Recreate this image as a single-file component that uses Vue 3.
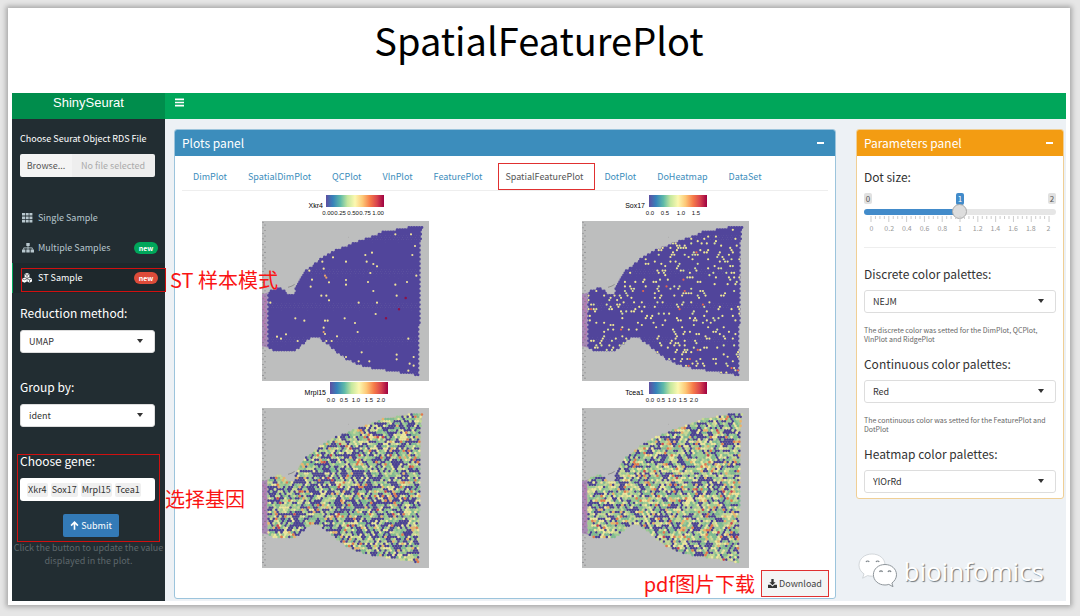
<script setup>
import { ref } from 'vue'

const tabs = ['DimPlot', 'SpatialDimPlot', 'QCPlot', 'VlnPlot', 'FeaturePlot', 'SpatialFeaturePlot', 'DotPlot', 'DoHeatmap', 'DataSet']
const activeTab = ref('SpatialFeaturePlot')
const genes = ['Xkr4', 'Sox17', 'Mrpl15', 'Tcea1']
const reduction = ref('UMAP')
const group = ref('ident')
const dotSize = ref(1)
const scale = ['0', '0.2', '0.4', '0.6', '0.8', '1', '1.2', '1.4', '1.6', '1.8', '2']
const palettes = ref([
  { id: 'discrete', label: 'Discrete color palettes:', value: 'NEJM', help: 'The discrete color was setted for the DimPlot, QCPlot, VlnPlot and RidgePlot' },
  { id: 'continuous', label: 'Continuous color palettes:', value: 'Red', help: 'The continuous color was setted for the FeaturePlot and DotPlot' },
  { id: 'heatmap', label: 'Heatmap color palettes:', value: 'YlOrRd', help: '' }
])

// Tissue section outline, in slide units
const outline = [
  [38, 308], [50, 300], [75, 293], [88, 300], [100, 310], [118, 312], [124, 288], [136, 260], [160, 235], [200, 205],
  [240, 181], [290, 160], [340, 142], [385, 125], [430, 117], [470, 110], [502, 110], [502, 124], [498, 140],
  [497, 250], [494, 400], [493, 558], [460, 550], [400, 541], [340, 531], [300, 520], [265, 500], [240, 480],
  [215, 458], [195, 445], [175, 441], [160, 448], [140, 465], [120, 482], [60, 482], [42, 472], [38, 440]
]
const outlinePath = 'M' + outline.map(p => p.join(' ')).join('L') + 'Z'

function inside(x, y) {
  let hit = false
  for (let i = 0, j = outline.length - 1; i < outline.length; j = i++) {
    const [xi, yi] = outline[i]
    const [xj, yj] = outline[j]
    if ((yi > y) !== (yj > y) && x < ((xj - xi) * (y - yi)) / (yj - yi) + xi) hit = !hit
  }
  return hit
}

function hash(a, b, s) {
  let n = Math.imul(a + 101, 374761393) ^ Math.imul(b + 57, 668265263) ^ Math.imul(s + 13, 1274126177)
  n = Math.imul(n ^ (n >>> 13), 1274126177)
  n = Math.imul(n ^ (n >>> 15), 2246822519)
  return ((n ^ (n >>> 16)) >>> 0) / 4294967296
}

const spots = []
for (let r = 0; r < 70; r++) {
  for (let c = 0; c < 64; c++) {
    const x = 26 + c * 7.8 + (r % 2 ? 3.9 : 0)
    const y = 98 + r * 6.8
    if (inside(x, y)) spots.push({ x: x.toFixed(1), y: y.toFixed(1), r, c })
  }
}

const BLUE = '#51459b'
const dots = list => list.map(([x, y]) => `M${x} ${y}h0`).join('')
const base = [{ color: BLUE, width: 8.8, d: dots(spots.map(s => [s.x, s.y])) }]

const xkr4 = [
  [422, 132], [469, 132], [481, 167], [473, 194], [352, 187], [332, 194], [235, 201], [203, 214], [274, 214], [336, 214],
  [356, 221], [367, 228], [207, 235], [164, 241], [347, 248], [485, 256], [172, 268], [274, 269], [274, 283], [340, 275],
  [223, 276], [457, 275], [422, 283], [168, 289], [356, 302], [200, 316], [215, 316], [223, 330], [426, 316], [47, 337],
  [312, 337], [367, 337], [363, 371], [270, 384], [122, 384], [149, 391], [211, 391], [219, 391], [301, 398], [207, 412],
  [309, 425], [211, 431], [247, 438], [94, 432], [67, 439], [79, 445], [129, 452], [215, 452], [231, 452], [461, 445],
  [321, 486], [274, 500], [312, 513], [344, 513], [426, 493], [426, 507], [477, 500], [465, 520], [477, 526], [461, 541]
]

function paint(pick, width) {
  const groups = {}
  for (const s of spots) {
    const color = pick(s)
    if (color) (groups[color] ||= []).push([s.x, s.y])
  }
  return Object.entries(groups).map(([color, list]) => ({ color, width, d: dots(list) }))
}

function sparse(s) {
  const v = hash(s.c, s.r, 4) * 0.78 + hash(s.c >> 1, s.r >> 1, 9) * 0.22
  if (v > 0.785) return hash(s.c, s.r, 7) > 0.95 ? '#e8684d' : hash(s.c, s.r, 8) > 0.8 ? '#d8e29a' : '#efe795'
  return null
}

function dense(seed, cut) {
  return s => {
    const v = hash(s.c, s.r, seed) * 0.58 + hash(s.c >> 1, s.r >> 1, seed + 3) * 0.42
    if (v < cut) return '#4a4294'
    const k = hash(s.c, s.r, seed + 5)
    if (k < 0.27) return '#7dbb91'
    if (k < 0.48) return '#9ccb94'
    if (k < 0.64) return '#c6d994'
    if (k < 0.87) return '#ece79c'
    if (k < 0.94) return '#eab36c'
    return k < 0.985 ? '#e27a4e' : '#c94750'
  }
}

const plots = [
  { gene: 'Xkr4', labelEnd: 61, bar: 64, tissue: '#aaa6b8', ticks: [['0.00', 66], ['0.25', 78], ['0.50', 91], ['0.75', 103], ['1.00', 116]],
    layers: [...base, { color: '#f0e39a', width: 6.6, d: dots(xkr4) }, { color: '#e9a368', width: 6.6, d: dots([[211, 256], [215, 262], [207, 425]]) }, { color: '#8d1148', width: 7.4, d: dots([[453, 323], [433, 357], [394, 384]]) }] },
  { gene: 'Sox17', labelEnd: 63, bar: 67, tissue: '#aaa6b8', ticks: [['0.0', 68], ['0.5', 83], ['1.0', 99], ['1.5', 114]],
    layers: [...base, ...paint(sparse, 6.6)] },
  { gene: 'Mrpl15', labelEnd: 64, bar: 68, tissue: '#b9c09c', ticks: [['0.0', 69], ['0.5', 82], ['1.0', 94], ['1.5', 107], ['2.0', 119]],
    layers: paint(dense(21, 0.45), 8) },
  { gene: 'Tcea1', labelEnd: 62, bar: 67, tissue: '#b9c09c', ticks: [['0.0', 68], ['0.5', 79], ['1.0', 90], ['1.5', 101], ['2.0', 112]],
    layers: paint(dense(44, 0.38), 8) }
]

const fiducials = Array.from({ length: 58 }, (_, i) => `M${i % 2 ? 31 : 25} ${96 + i * 8.2}h0`).join('')
</script>

<template>
  <main class="page">
    <section class="slide">
      <h1 class="title">SpatialFeaturePlot</h1>
      <div class="app">
        <header class="topbar">
          <a class="brand" href="#">ShinySeurat</a>
          <button class="toggle" type="button" aria-label="Toggle navigation">
            <svg viewBox="0 0 9 9" width="9" height="9"><path d="M0 1.3h9M0 4.5h9M0 7.7h9" stroke="#fff" stroke-width="1.7" /></svg>
          </button>
        </header>

        <div class="columns">
          <aside class="sidebar">
            <div class="upload">
              <label for="rds">Choose Seurat Object RDS File</label>
              <div class="file">
                <button type="button">Browse...</button>
                <input id="rds" type="text" placeholder="No file selected" readonly />
              </div>
            </div>

            <nav>
              <ul class="menu">
                <li>
                  <a href="#">
                    <svg class="mi" viewBox="0 0 12 10"><path d="M0 0h3v2.6H0zM3.7 0h3v2.6h-3zM7.4 0h3v2.6h-3zM0 3.4h3V6H0zM3.7 3.4h3V6h-3zM7.4 3.4h3V6h-3zM0 6.8h3v2.6H0zM3.7 6.8h3v2.6h-3zM7.4 6.8h3v2.6h-3z" fill="#b8c7ce" /></svg>
                    <span>Single Sample</span>
                  </a>
                </li>
                <li>
                  <a href="#">
                    <svg class="mi" viewBox="0 0 12 10"><path d="M4.3 0h3.4v3H4.3zM0 6.6h3.4v3H0zM4.3 6.6h3.4v3H4.3zM8.6 6.6H12v3H8.6z" fill="#b8c7ce" /><path d="M6 3v3.6M1.7 6.6V4.9h8.6v1.7" fill="none" stroke="#b8c7ce" stroke-width=".9" /></svg>
                    <span>Multiple Samples</span>
                    <small class="badge green">new</small>
                  </a>
                </li>
                <li class="active">
                  <a href="#">
                    <svg class="mi" viewBox="0 0 12 10"><path d="M5 0l2.4 1.1v3L5 5.2 2.600 4.100v-3zM2.500 4.600l2.400 1.100v2.800L2.500 9.700.1 8.500V5.700zM7.500 4.600l2.500 1.100v2.800L7.500 9.700 5.200 8.500V5.700z" fill="#fff" /><path d="M2.800 1.300L5 2.300l2.200-1M.4 5.900l2.100.9 2.200-.9M5.500 5.900l2 .9 2.200-.9M7.500 6.800v2.700M5 2.400v2.400" fill="none" stroke="#1e282c" stroke-width=".6" /></svg>
                    <span>ST Sample</span>
                    <small class="badge red">new</small>
                  </a>
                  <i class="mark mark-sample"></i>
                  <span class="note note-sample">ST 样本模式</span>
                </li>
              </ul>
            </nav>

            <div class="field">
              <label for="reduction">Reduction method:</label>
              <div class="pick">
                <select id="reduction" v-model="reduction"><option>UMAP</option><option>TSNE</option><option>PCA</option></select>
              </div>
            </div>
            <div class="field">
              <label for="group">Group by:</label>
              <div class="pick">
                <select id="group" v-model="group"><option>ident</option></select>
              </div>
            </div>
            <div class="field gene">
              <label for="gene">Choose gene:</label>
              <div class="tags">
                <span v-for="g in genes" :key="g" class="tag">{{ g }}</span>
                <input id="gene" type="text" />
              </div>
              <button class="submit" type="button">
                <svg viewBox="0 0 10 10" width="9" height="9"><path d="M5 9.600V1.500M1.200 5.200L5 1.400l3.800 3.800" fill="none" stroke="#fff" stroke-width="1.800" /></svg>
                Submit
              </button>
              <i class="mark mark-gene"></i>
              <span class="note note-gene">选择基因</span>
            </div>
            <p class="hint">Click the button to update the value displayed in the plot.</p>
          </aside>

          <div class="content">
            <section class="box plots-box">
              <header class="box-head blue">
                <h2>Plots panel</h2>
                <button type="button" aria-label="Collapse plots panel"><i></i></button>
              </header>
              <div class="tabs" role="tablist">
                <button v-for="t in tabs" :key="t" type="button" role="tab" :aria-selected="t === activeTab" :class="{ on: t === activeTab }" @click="activeTab = t">{{ t }}</button>
              </div>
              <div class="plots">
                <svg v-for="(p, i) in plots" :key="p.gene" class="plot" viewBox="0 0 167 187" role="img" :aria-label="p.gene">
                  <defs>
                    <linearGradient :id="'ramp' + i">
                      <stop offset="0" stop-color="#5e4fa2" />
                      <stop offset=".12" stop-color="#3682ba" />
                      <stop offset=".25" stop-color="#5fbaa8" />
                      <stop offset=".37" stop-color="#c4e79e" />
                      <stop offset=".5" stop-color="#fcf8b0" />
                      <stop offset=".63" stop-color="#fdc877" />
                      <stop offset=".76" stop-color="#f67b49" />
                      <stop offset=".88" stop-color="#d8434e" />
                      <stop offset="1" stop-color="#9e0142" />
                    </linearGradient>
                  </defs>
                  <text class="gene-name" :x="p.labelEnd" y="14" text-anchor="end">{{ p.gene }}</text>
                  <rect :x="p.bar" y="1" width="58" height="12" :fill="`url(#ramp${i})`" />
                  <text v-for="[t, x] in p.ticks" :key="t" class="tick" :x="x" y="21" text-anchor="middle">{{ t }}</text>
                  <svg x="0" y="27" width="167" height="161" viewBox="22 92 501 483">
                    <rect x="22" y="92" width="501" height="483" fill="#bdbebe" />
                    <path d="M22 312l20-6v166l-20-4z" fill="#a889b5" />
                    <path d="M24 320l12 14-10 18 12 20-12 24 12 22-12 30" fill="none" stroke="#c06fae" stroke-width="4" opacity=".6" />
                    <path :d="outlinePath" :fill="p.tissue" />
                    <path d="M100 291l12-4 8-5M281 141h1" fill="none" stroke="#777" stroke-width="2" />
                    <path :d="fiducials" stroke="#6d6d70" stroke-width="3.200" stroke-linecap="round" />
                    <path v-for="l in p.layers" :key="l.color" :d="l.d" :stroke="l.color" :stroke-width="l.width" stroke-linecap="round" />
                  </svg>
                </svg>
              </div>
              <footer class="actions">
                <span class="note">pdf图片下载</span>
                <button class="download" type="button">
                  <svg viewBox="0 0 10 10" width="9" height="9"><path d="M3.700 0h2.600v3.500h2.200L5 7 1.500 3.500h2.200z" fill="#333" /><path d="M0 6.500h2.900L5 8.400l2.100-1.900H10V10H0z" fill="#333" /></svg>
                  Download
                </button>
              </footer>
            </section>

            <section class="box params-box">
              <header class="box-head orange">
                <h2>Parameters panel</h2>
                <button type="button" aria-label="Collapse parameters panel"><i></i></button>
              </header>
              <div class="params">
                <label class="big" for="dot">Dot size:</label>
                <div class="slider">
                  <div class="flags"><span>0</span><span class="now">{{ dotSize }}</span><span>2</span></div>
                  <input id="dot" v-model="dotSize" type="range" min="0" max="2" step="0.1" />
                  <svg class="ruler" viewBox="0 0 177 6" preserveAspectRatio="none">
                    <path v-for="n in 41" :key="n" :d="`M${(n - 1) * 4.425} 0v${(n - 1) % 4 ? 3 : 6}`" stroke="#ccc" stroke-width="1" />
                  </svg>
                  <div class="scale"><span v-for="s in scale" :key="s">{{ s }}</span></div>
                </div>
                <hr />
                <div v-for="p in palettes" :key="p.id" class="palette">
                  <label class="big" :for="p.id">{{ p.label }}</label>
                  <div class="pick">
                    <select :id="p.id" v-model="p.value"><option>{{ p.value }}</option></select>
                  </div>
                  <p v-if="p.help">{{ p.help }}</p>
                </div>
              </div>
            </section>
          </div>
        </div>

        <div class="watermark">
          <svg viewBox="0 0 40 36" width="40" height="36">
            <path d="M14 1C6.500 1 1 6 1 12.200c0 3.600 1.900 6.600 5 8.700l-1.400 4.300 5-2.600c1.500.4 3 .6 4.600.6C21.500 23 27 18.300 27 12S21.500 1 14 1z" fill="#fff" stroke="#c9ced2" stroke-width=".8" />
            <path d="M27 11.500c-6.600 0-11.600 4.500-11.600 10.200S20.400 32 27 32c1.300 0 2.600-.2 3.800-.6l4.200 2.300-1.100-3.700c2.800-2 4.600-4.900 4.600-8.300 0-5.700-5-10.200-11.500-10.200z" fill="#fff" stroke="#8f969b" stroke-width="1" />
            <path d="M8 9a1.800 1.800 0 013.200 0M18 9a1.800 1.800 0 013.200 0M21.500 19a1.600 1.600 0 013 0M30 19a1.600 1.600 0 013 0" fill="none" stroke="#7f868b" stroke-width="1.200" />
          </svg>
          <span>bioinfomics</span>
        </div>
      </div>
    </section>
  </main>
</template>

<style>
html { height: 100%; background: #e6e6e6; }
body { margin: 0; }
</style>

<style scoped>
* { box-sizing: border-box; }
.page {
  min-height: 100vh;
  padding: 8px 10px 11px 8px;
  display: flex;
  font-family: "Noto Sans CJK SC", "Open Sans", sans-serif;
  font-size: 9px;
  line-height: 14px;
  color: #333;
}
button, input, select { font: inherit; color: inherit; margin: 0; border: 0; }
button { cursor: pointer; }
a { color: inherit; text-decoration: none; }
.slide {
  flex: 1;
  min-width: 0;
  display: flex;
  flex-direction: column;
  padding: 0 4px 4px;
  background: #fff;
  box-shadow: 0 0 5px 2px rgba(0, 0, 0, .28);
}
.title {
  margin: 0;
  height: 85px;
  text-align: center;
  font-size: 38px;
  line-height: 64px;
  font-weight: 400;
  color: #000;
}
.app { position: relative; flex: 1; display: flex; flex-direction: column; background: #edf1f5; }
.topbar { display: flex; height: 26px; background: #00a65a; }
.brand {
  width: 153px;
  height: 26px;
  background: #008d4c;
  color: #fff;
  text-align: center;
  font: 13px/19px "Liberation Sans", sans-serif;
}
.toggle { width: 28px; height: 18px; padding: 0; background: none; display: flex; align-items: center; justify-content: center; }
.columns { flex: 1; display: flex; }

.sidebar { width: 153px; background: #222d32; color: #fff; }
.upload { padding: 13px 10px 0 8px; }
.upload label { display: block; }
.file { display: flex; margin-top: 8px; height: 23px; }
.file button { width: 52px; padding: 0; background: #f4f4f4; color: #555; border-radius: 2px 0 0 2px; }
.file input { flex: 1; min-width: 0; padding: 0 0 0 9px; background: #eee; border-radius: 0 2px 2px 0; }
.file input::placeholder { color: #aaa; opacity: 1; }
.menu { list-style: none; margin: 26px 0 0; padding: 0; color: #b8c7ce; }
.menu li { position: relative; border-left: 1px solid transparent; }
.menu li.active { background: #1e282c; border-color: #00a65a; color: #fff; }
.menu a { display: flex; align-items: center; height: 30px; padding: 0 7px 0 9px; }
.mi { width: 12px; height: 10px; margin-right: 4px; }
.badge {
  margin-left: auto;
  width: 24px;
  height: 12px;
  border-radius: 6px;
  text-align: center;
  font-size: 7px;
  line-height: 12px;
  font-weight: 700;
  color: #fff;
}
.green { background: #00a65a; }
.red { background: #dd4b39; }
.mark { position: absolute; border: 1px solid #d01010; pointer-events: none; z-index: 1; }
.mark-sample { left: 8px; top: 5px; right: -1px; bottom: 1px; }
.mark-gene { left: 5px; right: 5px; top: 1px; bottom: -5px; }
.note { color: #fa1414; font-size: 20px; line-height: 24px; white-space: nowrap; }
.note-sample { position: absolute; left: 157px; top: 5px; z-index: 2; }
.note-gene { position: absolute; left: 153px; top: 34px; z-index: 2; }

.field { position: relative; padding: 0 10px 0 8px; margin-top: 26px; }
nav + .field { margin-top: 12px; }
.field label, .big { display: block; font-size: 12px; line-height: 16px; }
.pick { position: relative; margin-top: 9px; color: #333; }
.pick::after {
  content: "";
  position: absolute;
  right: 12px;
  top: 9px;
  border: 3px solid transparent;
  border-top: 4px solid #333;
  pointer-events: none;
}
.pick select {
  appearance: none;
  width: 100%;
  height: 23px;
  padding: 0 8px;
  background: #fff;
  border: 1px solid #ddd;
  border-radius: 3px;
}
.tags { display: flex; align-items: center; gap: 3px; height: 23px; margin-top: 9px; padding: 0 7px; background: #fff; border-radius: 3px; color: #333; }
.tag { padding: 0 1px; background: #efefef; border-radius: 2px; }
.tags input { flex: 1; min-width: 0; width: 0; padding: 0; background: none; outline: 0; }
.submit {
  display: flex;
  align-items: center;
  justify-content: center;
  gap: 2px;
  width: 56px;
  height: 23px;
  margin: 13px 0 0 43px;
  padding: 0;
  background: #337ab7;
  border-radius: 2px;
  color: #fff;
}
.hint { margin: 4px 0 0; text-align: center; line-height: 13px; color: #5d676b; }

.content { flex: 1; min-width: 0; display: flex; align-items: flex-start; gap: 20px; padding: 10px 2px 2px 9px; }
.box { background: #fff; border: 1px solid; border-radius: 3px; overflow: hidden; }
.plots-box { flex: 663 1 0; min-width: 0; align-self: stretch; border-color: #9cc4dc; display: flex; flex-direction: column; }
.params-box { flex: 207 1 0; min-width: 0; border-color: #f0cf95; }
.box-head { display: flex; justify-content: space-between; align-items: center; height: 27px; margin: -1px -1px 0; padding: 0 8px; color: #fff; }
.blue { background: #3c8dbc; }
.orange { background: #f39c12; }
.box-head h2 { margin: 0; font-size: 12px; line-height: 16px; font-weight: 400; }
.box-head button { width: 14px; height: 14px; padding: 0; background: none; display: grid; place-items: center; }
.box-head button i { width: 7px; height: 2px; background: #fff; }
.tabs { display: flex; gap: 1px; margin: 8px 7px 3px; padding-left: 1px; height: 27px; border-bottom: 1px solid #eee; color: #3c8dbc; }
.tabs button { padding: 0 10px; background: none; white-space: nowrap; }
.tabs .on { margin: -1px -2px 0 5px; padding: 0 11px 0 6px; color: #555; border: 1px solid #e03030; }
.plots { display: grid; grid-template-columns: 1fr 1fr; justify-items: center; padding: 0 9px 0 11px; }
.plot { display: block; width: 167px; max-width: 100%; }
.gene-name { font: 7px "Liberation Sans", sans-serif; fill: #000; }
.tick { font: 6px "Liberation Sans", sans-serif; fill: #111; }
.actions { display: flex; justify-content: flex-end; align-items: center; gap: 6px; padding: 2px 6px 1px; }
.download { display: flex; align-items: center; justify-content: center; gap: 2px; width: 68px; height: 27px; padding: 0; background: #f4f4f4; border: 1px solid #e03030; color: #444; }

.params { padding: 13px 7px 5px; }
.slider { margin-top: 8px; }
.flags { display: flex; justify-content: space-between; height: 12px; font-size: 8px; line-height: 11px; }
.flags span { height: 11px; min-width: 8px; text-align: center; background: #e1e1e1; border-radius: 2px; color: #555; }
.flags .now { height: 12px; background: #428bca; color: #fff; }
.slider input { display: block; appearance: none; width: 100%; height: 14px; background: none; }
.slider input::-webkit-slider-runnable-track {
  height: 6px;
  border-radius: 3px;
  background: linear-gradient(90deg, #428bca 50%, #e6e6e6 50%);
}
.slider input::-webkit-slider-thumb {
  appearance: none;
  width: 15px;
  height: 15px;
  margin-top: -5px;
  border: 1px solid #aaa;
  border-radius: 50%;
  background: #ddd;
}
.ruler { display: block; width: calc(100% - 14px); height: 6px; margin: -3px 7px 0; overflow: visible; }
.scale { display: flex; justify-content: space-between; height: 12px; padding: 0 1px; font-size: 7px; line-height: 12px; color: #999; }
.scale span { width: 13px; text-align: center; }
hr { margin: 13px 0 18px; border: 0; border-top: 1px solid #eee; }
.params .pick { margin-top: 8px; }
.palette p { margin: 13px 0 12px; font-size: 7px; line-height: 9px; color: #666; }

.watermark { position: absolute; right: 22px; bottom: 10px; display: flex; align-items: center; gap: 6px; font: 26px/40px "Open Sans", sans-serif; color: #fff; text-shadow: 1px 1px 1px #70787e; }
</style>
